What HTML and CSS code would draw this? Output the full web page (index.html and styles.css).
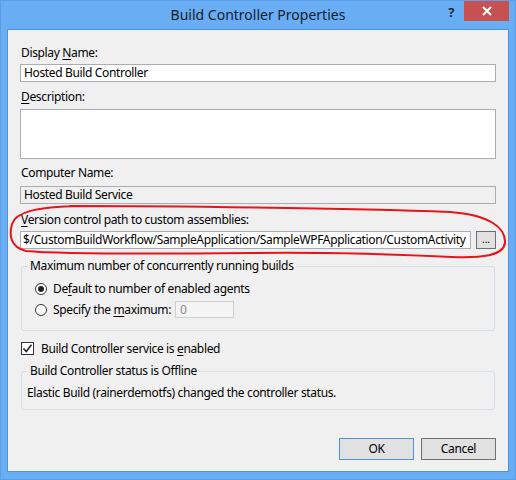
FILE: index.html
```html
<!DOCTYPE html>
<html>
<head>
<meta charset="utf-8">
<link rel="stylesheet" href="styles.css">
</head>
<body>
<div class="window">
  <div class="titlebar">
    <div></div>
    <div class="title">Build Controller Properties</div>
    <div class="controls">
      <span class="help">?</span>
      <span class="close"><svg width="10" height="10" viewBox="0 0 10 10"><path d="M1 1 L9 9 M9 1 L1 9" stroke="#fff" stroke-width="2" fill="none"/></svg></span>
    </div>
  </div>
  <div class="client">
    <div class="lbl m15">Display <u>N</u>ame:</div>
    <div class="tb m3">Hosted Build Controller</div>
    <div class="lbl m7"><u>D</u>escription:</div>
    <div class="tb tb-multi m4"></div>
    <div class="lbl m6">Computer Name:</div>
    <div class="tb tb-ro m5">Hosted Build Service</div>
    <div class="lbl m8"><u>V</u>ersion control path to custom assemblies:</div>
    <div class="pathrow m3">
      <div class="tb tb-path">$/CustomBuildWorkflow/SampleApplication/SampleWPFApplication/CustomActivity</div>
      <div class="browse">...</div>
    </div>
    <fieldset class="group g1">
      <legend>Maximum number of concurrently running builds</legend>
      <div class="rows">
        <div class="radiorow"><span class="radio checked"></span><span>De<u>f</u>ault to number of enabled agents</span></div>
        <div class="radiorow"><span class="radio"></span><span>Specify the <u>m</u>aximum:</span><span class="numbox">0</span></div>
      </div>
    </fieldset>
    <div class="checkrow">
      <span class="check"><svg width="11" height="11" viewBox="0 0 11 11"><path d="M1.5 5.5 L4.2 8.5 L9.5 1.8" stroke="#222" stroke-width="1.6" fill="none"/></svg></span>
      <span>Build Controller service is <u>e</u>nabled</span>
    </div>
    <fieldset class="group g2">
      <legend>Build Controller status is Offline</legend>
      <div class="status">Elastic Build (rainerdemotfs) changed the controller status.</div>
    </fieldset>
    <div class="buttons">
      <div class="btn btn-default">OK</div>
      <div class="btn">Cancel</div>
    </div>
  </div>
  <svg class="annot" width="516" height="480" viewBox="0 0 516 480">
    <path d="M70 206 C 160 206, 350 208, 450 212 C 490 215, 506 228, 505 243 C 503 256, 482 258, 452 257 C 390 254, 320 252, 250 253 C 150 254, 60 254, 26 251 C 10 247, 9 235, 12 224 C 16 212, 35 207, 80 206" stroke="#e8141c" stroke-width="2" fill="none" stroke-linecap="round"/>
  </svg>
</div>
</body>
</html>
```
FILE: styles.css
```css
* { box-sizing: border-box; }
body {
  margin: 0;
  font-family: "Noto Sans", "Open Sans", sans-serif;
  font-size: 12px;
  letter-spacing: -0.35px;
  color: #000;
}
.window {
  position: relative;
  width: 516px;
  height: 480px;
  border: 1px solid #5a9ee8;
  background: #69adf4;
  padding: 0 6px 7px;
  display: flex;
  flex-direction: column;
}
.titlebar {
  height: 28px;
  flex: none;
  display: grid;
  grid-template-columns: 1fr auto 1fr;
  align-items: center;
}
.title {
  font-size: 14px;
  letter-spacing: 0;
  color: #17202b;
  line-height: 28px;
}
.controls {
  justify-self: end;
  align-self: start;
  display: flex;
  align-items: flex-start;
}
.help {
  font-weight: bold;
  font-size: 13px;
  line-height: 14px;
  color: #1e2936;
  margin-top: 4px;
  margin-right: 10px;
}
.close {
  width: 45px;
  height: 20px;
  background: #c75050;
  display: flex;
  align-items: center;
  justify-content: center;
}
.client {
  flex: 1;
  border: 1px solid #4d92dc;
  background: #f0f0f0;
  padding: 0 12px 11px;
  display: flex;
  flex-direction: column;
}
.lbl { line-height: 16px; height: 16px; white-space: nowrap; padding-left: 1px; }
u { text-underline-offset: 2px; }
.m3 { margin-top: 3px; }
.m4 { margin-top: 4px; }
.m5 { margin-top: 5px; }
.m6 { margin-top: 6px; }
.m7 { margin-top: 7px; }
.m8 { margin-top: 8px; }
.m15 { margin-top: 15px; }
.tb {
  height: 18px;
  border: 1px solid #abadb3;
  background: #fff;
  line-height: 16px;
  padding: 0 3px;
  white-space: nowrap;
  overflow: hidden;
}
.tb-multi { height: 50px; }
.tb-ro { background: #f0f0f0; }
.pathrow {
  display: flex;
  gap: 5px;
  height: 18px;
}
.tb-path { flex: 1; padding-left: 2px; }
.browse {
  width: 20px;
  height: 18px;
  border: 1px solid #707070;
  background: #e1e1e1;
  font-size: 10px;
  line-height: 14px;
  text-align: center;
  letter-spacing: 0;
}
.group {
  margin: 0 1px;
  border: 1px solid #d5dfe5;
  border-radius: 3px;
  min-width: 0;
  padding-left: 0;
  padding-right: 0;
}
.group legend {
  line-height: 16px;
  padding: 0 2px;
  margin-left: 6px;
}
.g1 { margin-top: 9px; padding-top: 4px; padding-bottom: 10px; }
.rows { padding-left: 13px; }
.radiorow {
  display: flex;
  align-items: center;
  height: 21px;
}
.radio {
  width: 12px;
  height: 12px;
  border: 1px solid #333;
  border-radius: 50%;
  background: #fff;
  margin-right: 6px;
  display: flex;
  align-items: center;
  justify-content: center;
}
.radio.checked::after {
  content: "";
  width: 6px;
  height: 6px;
  border-radius: 50%;
  background: #222;
}
.numbox {
  margin-left: 4px;
  width: 59px;
  height: 17px;
  border: 1px solid #d0d0d0;
  background: #f4f4f4;
  color: #8a8a8a;
  line-height: 15px;
  padding-left: 4px;
}
.checkrow {
  margin-top: 9px;
  height: 16px;
  display: flex;
  align-items: center;
  padding-left: 1px;
}
.check {
  width: 13px;
  height: 13px;
  border: 1px solid #333;
  background: #fff;
  margin-right: 7px;
  display: flex;
  align-items: center;
  justify-content: center;
}
.g2 { margin-top: 7px; padding-top: 6px; padding-bottom: 8px; }
.status { line-height: 16px; white-space: nowrap; padding-left: 5px; }
.buttons {
  margin-top: auto;
  display: flex;
  justify-content: flex-end;
  gap: 7px;
}
.btn {
  width: 75px;
  height: 22px;
  border: 1px solid #707070;
  background: #e1e1e1;
  text-align: center;
  line-height: 20px;
}
.btn-default { border-color: #4a94e6; }
.annot {
  position: absolute;
  left: -1px;
  top: -1px;
  pointer-events: none;
}
```
